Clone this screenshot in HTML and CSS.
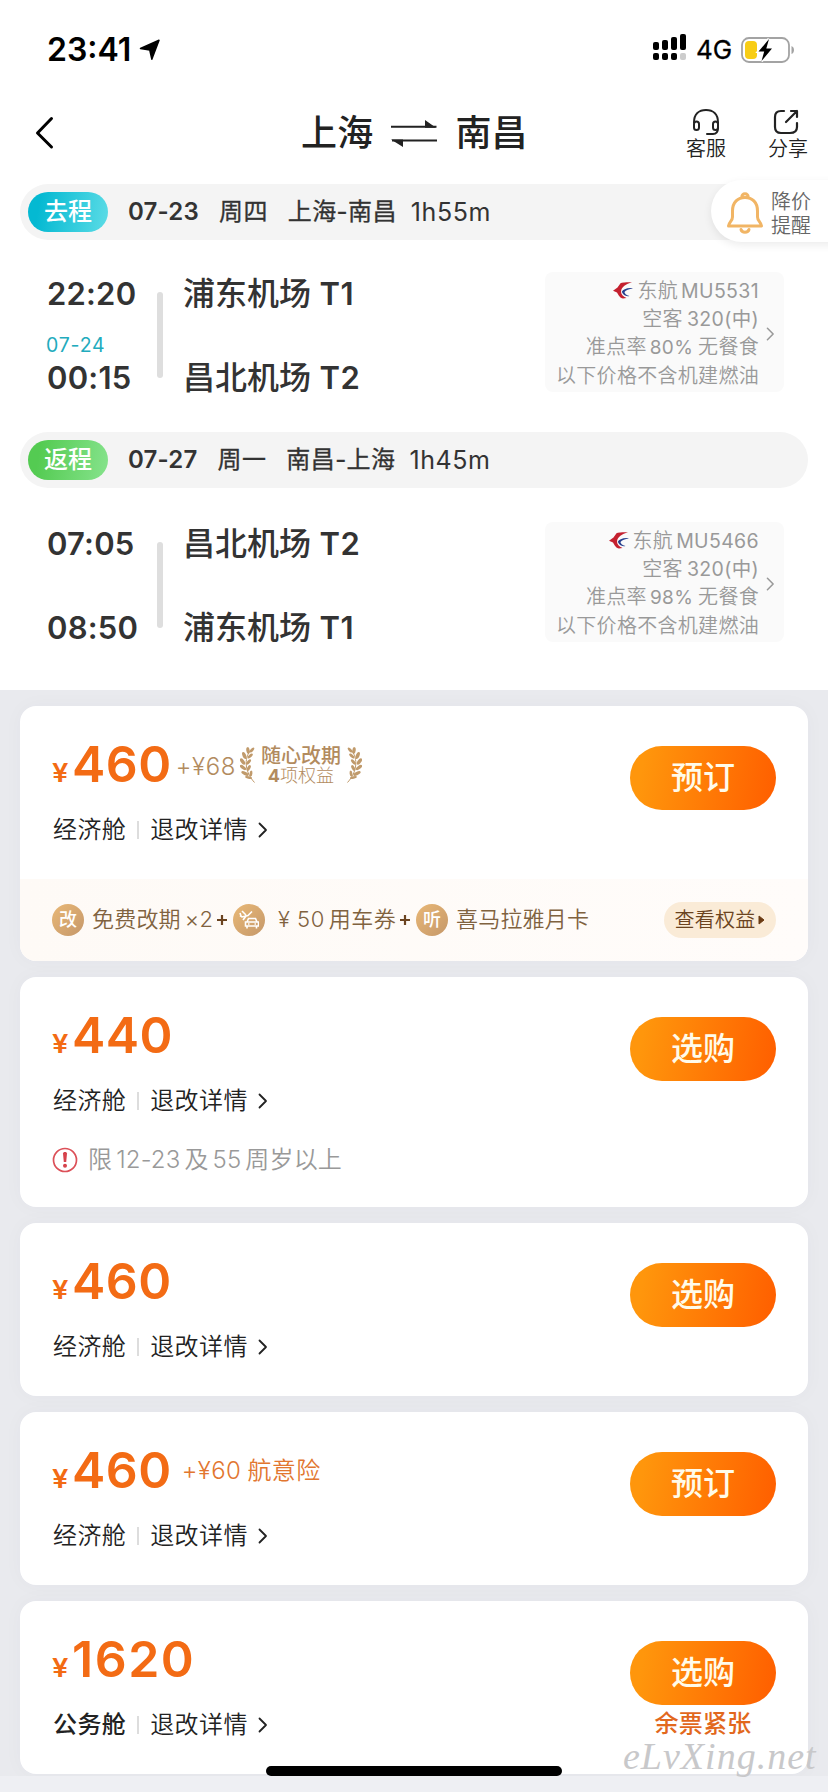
FILE: index.html
```html
<!DOCTYPE html>
<html lang="zh-CN">
<head>
<meta charset="utf-8">
<title>上海 - 南昌</title>
<link rel="stylesheet" href="styles.css">
</head>
<body>
<svg class="defs" width="0" height="0">
  <defs>
    <symbol id="chev" viewBox="0 0 10 16"><path d="M1.500 1.500 8 8l-6.500 6.500" fill="none" stroke="currentColor" stroke-width="1.800" stroke-linecap="round" stroke-linejoin="round"/></symbol>
    <symbol id="mu" viewBox="0 0 20 17">
      <path d="M19 .3C14 .2 9 .4 7.500 1.200L4.500 5.500 0 8.800l4 1.600C5.500 13 7 16 10 16.500L13.500 16C10 14.500 8 12.500 8 9.500 8.500 5 13 2 19 .3Z" fill="#c4202f"/>
      <path d="M20 6.200C14 5.500 10 7.500 8.800 9.800 10 12.800 12.500 14.800 16.500 14 13 13 11.500 11.500 11.500 10 12.800 8 16 7 20 6.200Z" fill="#27408f"/>
    </symbol>
    <symbol id="laurel" viewBox="0 0 15 37">
      <path d="M11 4C5 10 3 24 14.500 36.500" fill="none" stroke="#c09a6b" stroke-width="1"/>
      <g fill="#c09a6b">
        <ellipse cx="8" cy="4.500" rx="1.700" ry="3.400" transform="rotate(-8 8 4.500)"/>
        <ellipse cx="12" cy="4" rx="1.400" ry="3" transform="rotate(42 12 4)"/>
        <ellipse cx="4.300" cy="9.500" rx="1.800" ry="3.700" transform="rotate(-22 4.300 9.500)"/>
        <ellipse cx="10.200" cy="10" rx="1.500" ry="3.200" transform="rotate(48 10.200 10)"/>
        <ellipse cx="2.600" cy="15.500" rx="1.800" ry="3.700" transform="rotate(-36 2.600 15.500)"/>
        <ellipse cx="8.600" cy="16" rx="1.500" ry="3.200" transform="rotate(42 8.600 16)"/>
        <ellipse cx="3" cy="21.500" rx="1.700" ry="3.800" transform="rotate(-52 3 21.500)"/>
        <ellipse cx="8.800" cy="22" rx="1.500" ry="3.200" transform="rotate(28 8.800 22)"/>
        <ellipse cx="5" cy="27.500" rx="1.600" ry="4" transform="rotate(-64 5 27.500)"/>
        <ellipse cx="11" cy="27.500" rx="1.400" ry="3" transform="rotate(8 11 27.500)"/>
        <ellipse cx="8.500" cy="31.500" rx="1.200" ry="3.500" transform="rotate(-78 8.500 31.500)"/>
      </g>
    </symbol>
  </defs>
</svg>
<main class="screen">
  <header class="top">
    <div class="status">
      <span class="clock">23:41</span>
      <svg class="loc" width="22" height="22" viewBox="0 0 22 22"><path d="M1.500 9.500 20 1.200 12.800 20.200 10.800 11Z" fill="#000" stroke="#000" stroke-width="1.500" stroke-linejoin="round"/></svg>
      <svg class="signal" width="34" height="27" viewBox="0 0 34 27">
        <g fill="#000"><rect x="0" y="8" width="6" height="8" rx="2"/><rect x="9" y="6" width="6" height="10" rx="2"/><rect x="18" y="3" width="6" height="13" rx="2"/><rect x="27" y="0" width="6" height="16" rx="2"/><rect x="0" y="19" width="6" height="7" rx="2"/><rect x="9" y="19" width="6" height="7" rx="2"/><rect x="18" y="19" width="6" height="7" rx="2"/></g>
        <rect x="27" y="19" width="6" height="7" rx="2" fill="#ccc"/>
      </svg>
      <span class="net">4G</span>
      <svg class="battery" width="54" height="26" viewBox="0 0 54 26">
        <rect x="1" y="1" width="47" height="24" rx="7" fill="none" stroke="#a3a3a3" stroke-width="1.800"/>
        <path d="M50.500 9c3.300 1.200 3.300 7 0 8Z" fill="#a3a3a3"/>
        <rect x="4" y="4" width="12" height="18" rx="4" fill="#f8cd15"/>
        <path d="M28 2 17.500 14.600h5.700L20.500 24 31 11.400h-5.700Z" fill="#000" stroke="#fff" stroke-width="3" paint-order="stroke"/>
      </svg>
    </div>
    <nav class="nav">
      <svg class="back" width="19" height="34" viewBox="0 0 19 34"><path d="M16.500 2.500 2.500 17l14 14" fill="none" stroke="#000" stroke-width="3" stroke-linecap="round" stroke-linejoin="round"/></svg>
      <h1 class="title"><span>上海</span><svg width="46" height="28" viewBox="0 0 46 28"><path d="M0 7.800h45.500M1 21.500h45" fill="none" stroke="#222" stroke-width="2"/><path d="M34 1v7.800h11ZM12 28v-7.500H0Z" fill="#222"/></svg><span>南昌</span></h1>
      <div class="tool service">
        <svg width="28" height="28" viewBox="0 0 28 28" fill="none" stroke="#222" stroke-width="2" stroke-linecap="round"><path d="M2 14.500C2 6 7 2 14 2s12 4 12 12.500v5c0 4-2 6.500-5 6.500h-6"/><rect x="2" y="13.500" width="5" height="8.500" rx="2.500"/><rect x="21" y="13.500" width="5" height="8.500" rx="2.500"/></svg>
        <span>客服</span>
      </div>
      <div class="tool share">
        <svg width="26" height="26" viewBox="0 0 26 26" fill="none" stroke="#222" stroke-width="2.200" stroke-linecap="round" stroke-linejoin="round"><path d="M11 2H8C4 2 2 4 2 8v10c0 4 2 6 6 6h9c4 0 7-2 7-6v-4M18 2h6v6M24 2 13 13"/></svg>
        <span>分享</span>
      </div>
    </nav>
  </header>

  <section class="trip">
    <div class="bar">
      <span class="tag go">去程</span>
      <span class="day">07-23</span><span class="week">周四</span><span class="route">上海-南昌</span><span class="dur">1h55m</span>
      <div class="alert">
        <svg width="36" height="42" viewBox="0 0 36 42" fill="none" stroke="#f1b565" stroke-width="3" stroke-linejoin="round"><path d="M15 5.500c-1-5 7-5 6 0M5.500 19C5.500 10 11 5.500 18 5.500S30.500 10 30.500 19v6c0 4 3.500 5 4 9h-33c.5-4 4-5 4-9Z"/><path d="M14 37.500c1 3.500 7 3.500 8 0" stroke-linecap="round"/></svg>
        <span>降价<br>提醒</span>
      </div>
    </div>
    <div class="flight">
      <div class="times"><b>22:20</b><small>07-24</small><b>00:15</b></div>
      <i class="rail"></i>
      <div class="ports"><span>浦东机场 <em>T1</em></span><span>昌北机场 <em>T2</em></span></div>
      <div class="plane">
        <div class="lines">
          <p><svg class="mu" width="20" height="17"><use href="#mu"/></svg>东航<span class="n">MU5531</span></p>
          <p>空客<span class="n">320(中)</span></p>
          <p class="rate">准点率<span class="n">80%</span> 无餐食</p>
          <p>以下价格不含机建燃油</p>
        </div>
        <svg class="chev" width="9" height="14"><use href="#chev"/></svg>
      </div>
    </div>
    <div class="bar">
      <span class="tag ret">返程</span>
      <span class="day">07-27</span><span class="week">周一</span><span class="route">南昌-上海</span><span class="dur">1h45m</span>
    </div>
    <div class="flight second">
      <div class="times"><b>07:05</b><small></small><b>08:50</b></div>
      <i class="rail"></i>
      <div class="ports"><span>昌北机场 <em>T2</em></span><span>浦东机场 <em>T1</em></span></div>
      <div class="plane">
        <div class="lines">
          <p><svg class="mu" width="20" height="17"><use href="#mu"/></svg>东航<span class="n">MU5466</span></p>
          <p>空客<span class="n">320(中)</span></p>
          <p class="rate">准点率<span class="n">98%</span> 无餐食</p>
          <p>以下价格不含机建燃油</p>
        </div>
        <svg class="chev" width="9" height="14"><use href="#chev"/></svg>
      </div>
    </div>
  </section>

  <section class="fares">
    <article class="card first">
      <div class="main">
        <div class="info">
          <div class="price"><span class="yen">¥</span><span class="num">460</span><span class="plus68">+¥68</span>
            <span class="badge"><svg width="15" height="37"><use href="#laurel"/></svg><span class="bt"><b>随心改期</b><span><strong>4</strong>项权益</span></span><svg class="flip" width="15" height="37"><use href="#laurel"/></svg></span>
          </div>
          <div class="cabin"><span>经济舱</span><i></i><span>退改详情</span><svg width="10" height="16"><use href="#chev"/></svg></div>
        </div>
        <button class="buy">预订</button>
      </div>
      <div class="perks">
        <span class="dot">改</span><span class="pt p1">免费改期<span class="x2">×2</span></span><svg class="pl" width="10" height="12" viewBox="0 0 10 12"><path d="M0 6h10M5 1v10" stroke="#6b4420" stroke-width="2.200"/></svg>
        <span class="dot"><svg width="20" height="20" viewBox="0 0 20 20" fill="none" stroke="#fff" stroke-width="1.600"><path d="M1 5.500 3 7l6-1.500 4-4M3 1l4 4M4 10l3-4M1 3l1 3"/><path d="m8 12 1.500-3.500h7L18 12M6.500 12h13v4h-13ZM8 16v2.500M17.500 16v2.500M9 14h1.500M15.500 14H17"/></svg></span><span class="pt p2">¥ 50<span class="yc">用车券</span></span><svg class="pl" width="10" height="12" viewBox="0 0 10 12"><path d="M0 6h10M5 1v10" stroke="#6b4420" stroke-width="2.200"/></svg>
        <span class="dot">听</span><span class="pt p3">喜马拉雅月卡</span>
        <span class="view">查看权益<svg width="7" height="10" viewBox="0 0 7 10"><path d="M1 1v8l5-4Z" fill="#6b3a12" stroke="#6b3a12" stroke-linejoin="round"/></svg></span>
      </div>
    </article>

    <article class="card limited">
      <div class="main">
        <div class="info">
          <div class="price"><span class="yen">¥</span><span class="num">440</span></div>
          <div class="cabin"><span>经济舱</span><i></i><span>退改详情</span><svg width="10" height="16"><use href="#chev"/></svg></div>
          <div class="limit"><svg width="26" height="26" viewBox="0 0 26 26"><circle cx="13" cy="13" r="11.500" fill="none" stroke="#dc5058" stroke-width="1.700"/><path d="M11 6.500c0-2 4-2 4 0l-.8 8.500h-2.400Z" fill="#d6434c"/><circle cx="13" cy="18.700" r="2" fill="#d6434c"/></svg><span>限<span class="g">12-23</span><span class="g">及</span><span class="g">55</span><span class="g">周岁以上</span></span></div>
        </div>
        <button class="buy">选购</button>
      </div>
    </article>

    <article class="card">
      <div class="main">
        <div class="info">
          <div class="price"><span class="yen">¥</span><span class="num">460</span></div>
          <div class="cabin"><span>经济舱</span><i></i><span>退改详情</span><svg width="10" height="16"><use href="#chev"/></svg></div>
        </div>
        <button class="buy">选购</button>
      </div>
    </article>

    <article class="card">
      <div class="main">
        <div class="info">
          <div class="price"><span class="yen">¥</span><span class="num">460</span><span class="ins">+¥60 <span>航意险</span></span></div>
          <div class="cabin"><span>经济舱</span><i></i><span>退改详情</span><svg width="10" height="16"><use href="#chev"/></svg></div>
        </div>
        <button class="buy">预订</button>
      </div>
    </article>

    <article class="card">
      <div class="main">
        <div class="info">
          <div class="price"><span class="yen">¥</span><span class="num wide">1620</span></div>
          <div class="cabin"><span class="biz">公务舱</span><i></i><span>退改详情</span><svg width="10" height="16"><use href="#chev"/></svg></div>
        </div>
        <div class="act"><button class="buy">选购</button><span class="few">余票紧张</span></div>
      </div>
    </article>
  </section>
  <div class="bottom"></div>
  <div class="home"></div>
  <div class="mark">eLvXing.net</div>
</main>
</body>
</html>
```
FILE: styles.css
```css
* { box-sizing: border-box; margin: 0; padding: 0; }
body { width: 828px; height: 1792px; overflow: hidden; background: #fff; font-family: Inter, "Noto Sans CJK SC", sans-serif; color: #333; }
.defs { position: absolute; }
.screen { position: relative; width: 828px; height: 1792px; display: flex; flex-direction: column; overflow: hidden; }
i, em { font-style: normal; }

.top { height: 184px; }
.status { height: 92px; display: flex; align-items: center; padding: 7px 33px 0 47px; color: #000; }
.clock { font-size: 32px; font-weight: 600; line-height: 40px; width: 92px; }
.loc { margin-right: auto; }
.signal { margin-right: 9px; margin-top: -4px; }
.net { font-size: 26px; font-weight: 400; -webkit-text-stroke: .3px #000; line-height: 40px; width: 45px; }
.nav { height: 92px; display: grid; grid-template-columns: 301px 1fr 80px 80px; padding-bottom: 8px; align-items: center; }
.back { margin: -2px 0 0 35px; }
.title { display: flex; align-items: center; gap: 18px; font-size: 36px; line-height: 50px; font-weight: 500; color: #222; margin-top: -2px; white-space: nowrap; }
.title span { letter-spacing: .2px; }
.tool { display: flex; flex-direction: column; align-items: center; font-size: 20px; line-height: 24px; color: #222; gap: 1px; font-weight: 350; }
.service { margin-right: 4px; }
.share svg { margin: 1px 4px 1px 0; }

.trip { height: 506px; padding: 0 20px; }
.bar { position: relative; height: 56px; border-radius: 28px; background: #f4f4f4; padding-left: 8px; display: flex; align-items: center; font-size: 24px; line-height: 36px; white-space: nowrap; }
.tag { width: 80px; height: 40px; border-radius: 20px; color: #fff; text-align: center; line-height: 39px; font-weight: 500; font-size: 24px; margin-right: 20px; }
.go { background: linear-gradient(100deg, #04b9d2 15%, #5cdce6); }
.ret { background: linear-gradient(100deg, #54cb52 15%, #86e38c); }
.day { font-weight: 600; margin-right: 20px; letter-spacing: .2px; }
.week, .route { font-weight: 400; -webkit-text-stroke: .3px #333; letter-spacing: .4px; }
.week { margin-right: 20px; }
.route { margin-right: 14px; }
.dur { font-size: 25px; letter-spacing: .6px; }
.alert { position: absolute; left: 691px; top: -4px; width: 140px; height: 62px; border-radius: 31px 0 0 31px; background: #fff; box-shadow: 0 3px 8px rgba(0,0,0,.08); display: flex; gap: 8px; padding: 10px 0 0 16px; font-size: 20px; line-height: 24px; color: #666; font-weight: 350; }
.alert svg { margin-top: 2px; }

.flight { height: 192px; padding: 32px 24px 0 27px; display: grid; grid-template-columns: 110px 26px 1fr 239px; }
.second { padding-top: 34px; height: 202px; }
.times { display: flex; flex-direction: column; font-size: 31px; letter-spacing: .2px; padding-top: 3px; }
.times b { font-weight: 600; line-height: 38px; height: 38px; }
.times small { font-size: 19.5px; line-height: 24px; height: 24px; margin: 20px 0 2px -1px; color: #22abbd; letter-spacing: .8px; }
.rail { width: 6px; height: 86px; border-radius: 3px; background: #dedede; margin-top: 20px; }
.ports { display: flex; flex-direction: column; font-size: 32px; line-height: 40px; gap: 44px; padding-top: 2px; font-weight: 500; white-space: nowrap; }
.ports em { font-weight: 600; font-size: 31px; letter-spacing: .5px; }
.plane { height: 120px; border-radius: 8px; background: #fafafa; display: flex; align-items: center; justify-content: flex-end; padding: 2px 9px 0 0; gap: 7px; color: #999; }
.lines { font-size: 20px; line-height: 28px; text-align: right; letter-spacing: .3px; white-space: nowrap; font-weight: 350; }
.lines .n { margin-left: 4px; font-size: 19.5px; letter-spacing: .35px; font-weight: 400; }
.rate { word-spacing: -1px; }
.lines .rate .n { margin-left: 3px; font-size: 19px; }
.lines p:first-child .n { margin-left: 3px; }
.mu { margin-right: 4px; vertical-align: -1px; }
.chev { color: #999; margin-top: 2px; }

.fares { height: 1086px; background: #e9eaee; padding: 16px 20px 0; display: flex; flex-direction: column; gap: 16px; }
.card { height: 173px; border-radius: 16px; background: #fff; overflow: hidden; flex: none; box-shadow: 0 0 20px rgba(60,70,90,.03); }
.first { height: 255px; }
.limited { height: 230px; }
.main { height: 173px; display: flex; justify-content: space-between; padding: 30px 32px 0 32px; }
.price { height: 56px; display: flex; color: #f36b14; align-items: baseline; white-space: nowrap; }
.yen { font-size: 26px; font-weight: 600; width: 20px; transform: scaleX(1.12); transform-origin: 0 50%; }
.num { font-size: 50px; line-height: 56px; font-weight: 600; letter-spacing: .5px; }
.wide { letter-spacing: 1.5px; }
.plus68 { color: #b28b5e; font-size: 24px; margin-left: 4px; transform: translateY(-7px); font-weight: 350; letter-spacing: .6px; }
.ins { font-size: 24px; color: #e2762f; margin-left: 10px; transform: translateY(-9px); letter-spacing: .4px; font-weight: 350; }
.ins span { margin-left: -1px; }
.badge { display: flex; align-self: center; gap: 6px; color: #b28b5e; margin: 3px 0 0 4px; }
.bt { display: flex; flex-direction: column; align-items: center; font-size: 18px; line-height: 20px; font-weight: 300; }
.bt b { font-size: 20px; font-weight: 500; }
.bt strong { font-weight: 700; }
.flip { transform: scaleX(-1); }
.cabin { display: flex; align-items: center; height: 36px; margin-top: 20px; font-size: 24px; line-height: 36px; color: #222; letter-spacing: .4px; font-weight: 350; padding-left: 1px; }
.cabin i { width: 2px; height: 18px; background: #ddd; margin: 0 11px 0 11px; }
.cabin svg { margin-left: 10px; }
.biz { font-weight: 500; }
.buy { width: 146px; height: 64px; margin-top: 10px; border: 0; border-radius: 32px; background: linear-gradient(100deg, #ff960c 10%, #ff6100 95%); color: #fffbea; font: 500 32px/62px Inter, "Noto Sans CJK SC", sans-serif; }
.perks { height: 82px; background: linear-gradient(90deg, #fefaf6, #fffcfa); display: flex; align-items: center; padding: 0 32px; font-size: 22px; color: #80623f; font-weight: 350; white-space: nowrap; }
.dot { width: 32px; height: 32px; border-radius: 50%; background: linear-gradient(135deg, #e9b876, #c5986a); color: #fff; font-size: 18px; line-height: 30px; text-align: center; font-weight: 500; display: flex; justify-content: center; align-items: center; flex: none; }
.pt { margin: -6px 6px 0 8px; letter-spacing: .2px; }
.p1 { width: 119px; }
.p2 { width: 117px; margin-left: 13px; margin-right: 5px; letter-spacing: .5px; }
.x2, .yc { margin-left: 4px; }
.pl { margin-right: 6px; flex: none; }
.view { margin-left: auto; width: 112px; height: 36px; border-radius: 18px; background: #faebd7; color: #6b4320; font-size: 20px; line-height: 34px; font-weight: 350; letter-spacing: .2px; display: flex; align-items: center; justify-content: center; gap: 3px; }
.limit { display: flex; align-items: center; gap: 10px; margin-top: 23px; height: 36px; font-size: 24px; line-height: 36px; color: #999; font-weight: 350; white-space: nowrap; letter-spacing: .15px; }
.limit .g { margin-left: 4px; }
.act { display: flex; flex-direction: column; align-items: center; }
.few { font-size: 24px; line-height: 36px; margin-top: 1px; color: #e2681d; font-weight: 500; letter-spacing: .2px; }
.bottom { height: 16px; background: #eeeff3; }
.home { position: absolute; left: 266px; top: 1766px; width: 296px; height: 10px; border-radius: 5px; background: #000; }
.mark { position: absolute; left: 623px; top: 1734px; font: italic 38px/44px "Liberation Serif", cursive; letter-spacing: 1px; color: #c8c8ca; }
```
